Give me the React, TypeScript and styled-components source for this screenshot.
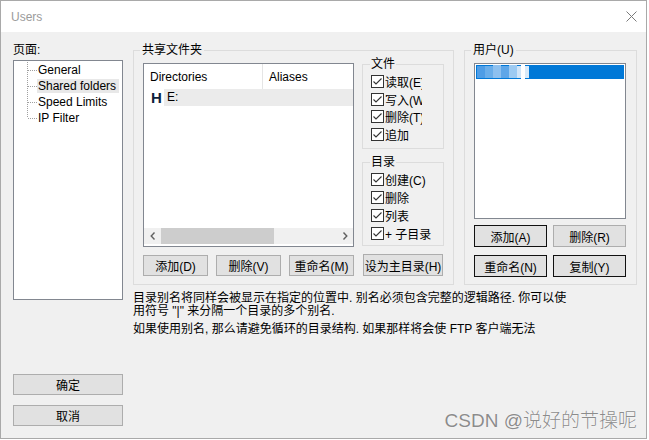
import React from 'react';
import styled, { createGlobalStyle } from 'styled-components';

const GlobalStyle = createGlobalStyle`
  html, body {
    margin: 0;
    padding: 0;
    background: #ffffff;
  }
  body {
    font-family: "Liberation Sans", "Noto Sans CJK SC", sans-serif;
    font-size: 12px;
    color: #000;
  }
`;

const pages = ['General', 'Shared folders', 'Speed Limits', 'IP Filter'];
const fileRights = ['读取(E)', '写入(W)', '删除(T)', '追加'];
const dirRights = ['创建(C)', '删除', '列表', '+ 子目录'];

const Window = styled.div`
  position: relative;
  width: 647px;
  height: 439px;
  box-sizing: border-box;
  border: 1px solid #a9a9a9;
  display: flex;
  flex-direction: column;
  overflow: hidden;
`;

const TitleBar = styled.div`
  height: 31px;
  flex: none;
  background: #ffffff;
  display: flex;
  align-items: center;
  justify-content: space-between;
  padding: 0 9px 0 10px;
`;

const Title = styled.span`
  font-size: 12px;
  color: #9b9b9b;
`;

const Body = styled.div`
  flex: 1;
  background: #f0f0f0;
  display: grid;
  grid-template-columns: 110px 1fr;
  column-gap: 10px;
  padding: 0 9px 0 12px;
`;

const LeftCol = styled.div`
  display: flex;
  flex-direction: column;
`;

const PageLabel = styled.div`
  margin-top: 11px;
  line-height: 14px;
`;

const TreeBox = styled.div`
  margin-top: 3px;
  height: 240px;
  box-sizing: border-box;
  border: 1px solid #828790;
  background: #ffffff;
  padding: 1px 0 0 13px;
`;

const TreeRow = styled.div`
  display: flex;
  align-items: center;
  height: 16px;
`;

const TreeText = styled.span<{ $selected?: boolean }>`
  line-height: 14px;
  padding: 0 3px 0 1px;
  white-space: nowrap;
  background: ${p => (p.$selected ? '#e8e8e8' : 'transparent')};
`;

const RightCol = styled.div`
  display: flex;
  flex-direction: column;
  min-width: 0;
`;

const TopRow = styled.div`
  display: flex;
  gap: 10px;
  margin-top: 11px;
`;

const Group = styled.fieldset<{ $width?: number }>`
  margin: 0;
  padding: 0;
  min-width: 0;
  border: 1px solid #dcdcdc;
  ${p => (p.$width ? `width: ${p.$width}px; flex: none;` : 'flex: 1;')}
  box-sizing: border-box;
`;

const Legend = styled.legend`
  margin-left: 6px;
  padding: 0 2px;
  line-height: 14px;
  font-size: 12px;
`;

const SharedInner = styled.div`
  display: flex;
  gap: 8px;
  padding: 0 9px 8px 9px;
`;

const ListPane = styled.div`
  width: 211px;
  display: flex;
  flex-direction: column;
`;

const ListView = styled.div`
  margin-top: 6px;
  height: 184px;
  box-sizing: border-box;
  border: 1px solid #828790;
  background: #ffffff;
  display: flex;
  flex-direction: column;
`;

const Header = styled.div`
  display: flex;
  height: 25px;
  flex: none;
`;

const HeaderCell = styled.div<{ $width?: number }>`
  ${p => (p.$width ? `width: ${p.$width}px; flex: none; border-right: 1px solid #e5e5e5;` : 'flex: 1;')}
  box-sizing: border-box;
  display: flex;
  align-items: center;
  padding-left: 6px;
`;

const DirRow = styled.div`
  display: flex;
  height: 17px;
`;

const DriveIcon = styled.span`
  width: 20px;
  flex: none;
  box-sizing: border-box;
  padding-left: 7px;
  font-family: "Liberation Sans", sans-serif;
  font-weight: bold;
  font-size: 15px;
  line-height: 17px;
  color: #0d1f3c;
`;

const DirCell = styled.span`
  flex: 1;
  background: #ebebeb;
  line-height: 17px;
  padding-left: 3px;
`;

const Spacer = styled.div`
  flex: 1;
`;

const HScroll = styled.div`
  height: 16px;
  flex: none;
  margin-bottom: 2px;
  background: #f0f0f0;
  display: flex;
  align-items: center;
`;

const ScrollArrow = styled.span`
  width: 17px;
  flex: none;
  display: flex;
  justify-content: center;
  align-items: center;
`;

const ScrollTrack = styled.div`
  flex: 1;
  height: 100%;
  display: flex;
`;

const ScrollThumb = styled.div`
  width: 113px;
  height: 100%;
  background: #cdcdcd;
`;

const ButtonGrid = styled.div<{ $cols: number; $gap: number; $top: number }>`
  display: grid;
  grid-template-columns: repeat(${p => p.$cols}, 1fr);
  gap: 8px ${p => p.$gap}px;
  margin-top: ${p => p.$top}px;
`;

const Button = styled.button<{ $dark?: boolean; $height?: number }>`
  height: ${p => p.$height ?? 21}px;
  box-sizing: border-box;
  margin: 0;
  padding: 0;
  border: 1px solid ${p => (p.$dark ? '#111111' : '#adadad')};
  background: #e1e1e1;
  font-family: inherit;
  font-size: 12px;
  color: #000;
  white-space: nowrap;
`;

const RightsPane = styled.div`
  width: 82px;
  flex: none;
  display: flex;
  flex-direction: column;
`;

const RightsGroup = styled.fieldset<{ $top: number; $padTop: number; $padBottom: number }>`
  margin: ${p => p.$top}px 0 0 0;
  padding: ${p => p.$padTop}px 0 ${p => p.$padBottom}px 0;
  min-width: 0;
  border: 1px solid #dcdcdc;
`;

const RightsLegend = styled.legend`
  margin-left: 7px;
  padding: 0 1px;
  line-height: 14px;
`;

const CheckRow = styled.label<{ $height: number }>`
  display: flex;
  align-items: center;
  height: ${p => p.$height}px;
  padding-left: 8px;
  gap: 1px;
`;

const CheckText = styled.span<{ $clip?: number }>`
  white-space: nowrap;
  overflow: hidden;
  ${p => (p.$clip ? `max-width: ${p.$clip}px;` : '')}
`;

const HomeButton = styled(Button)`
  margin: 8px 0 0 1px;
  width: 80px;
`;

const UsersInner = styled.div`
  padding: 0 10px 7px 9px;
`;

const UserList = styled.div`
  margin-top: 6px;
  height: 156px;
  box-sizing: border-box;
  border: 1px solid #828790;
  background: #ffffff;
  padding: 1px;
`;

const UserRow = styled.div`
  height: 14px;
  background: #0078d7;
  display: flex;
  align-items: center;
`;

const Description = styled.div`
  margin-top: 7px;
  line-height: 13px;
  white-space: nowrap;
`;

const Para = styled.p`
  margin: 0 0 5px 0;
`;

const OkButton = styled(Button)`
  margin-top: 74px;
`;

const CancelButton = styled(Button)`
  margin-top: 10px;
`;

const Watermark = styled.div`
  position: absolute;
  right: 9px;
  bottom: 6px;
  font-size: 19px;
  line-height: 22px;
  color: #8c8c8c;
  text-shadow: 0 0 1px #ffffff, 0 0 1px #ffffff;
  font-family: "Liberation Sans", "Noto Sans CJK SC", sans-serif;
  font-weight: 300;
`;

const CloseIcon = () => (
  <svg width="11" height="11" viewBox="0 0 11 11">
    <path d="M0.5 0.5 L10.5 10.5 M10.5 0.5 L0.5 10.5" stroke="#7a7a7a" strokeWidth="1" fill="none" />
  </svg>
);

const TreeConnector = ({ last }: { last?: boolean }) => (
  <svg width="10" height="16" viewBox="0 0 10 16" style={{ flex: 'none' }}>
    <line x1="0.5" y1="0" x2="0.5" y2={last ? 8 : 16} stroke="#a0a0a0" strokeDasharray="1 1" />
    <line x1="1" y1="8.5" x2="10" y2="8.5" stroke="#a0a0a0" strokeDasharray="1 1" />
  </svg>
);

const CheckBox = () => (
  <svg width="13" height="13" viewBox="0 0 13 13" style={{ flex: 'none' }}>
    <rect x="0.5" y="0.5" width="12" height="12" fill="#ffffff" stroke="#333333" />
    <path d="M2.5 6.5 L5 9 L10.5 3.5" stroke="#333333" strokeWidth="1.1" fill="none" />
  </svg>
);

const Chevron = ({ dir }: { dir: 'left' | 'right' }) => (
  <svg width="6" height="8" viewBox="0 0 6 8">
    <path d={dir === 'left' ? 'M4.5 0.5 L1.2 4 L4.5 7.5' : 'M1.5 0.5 L4.8 4 L1.5 7.5'} stroke="#606060" strokeWidth="1.4" fill="none" />
  </svg>
);

// blurred user name
const Mosaic = () => (
  <svg width="56" height="14" viewBox="0 0 56 14" style={{ marginLeft: 1 }}>
    <rect x="0" y="1" width="8" height="12" fill="#4e9de6" />
    <rect x="8" y="1" width="8" height="12" fill="#6aaeea" />
    <rect x="16" y="0" width="8" height="13" fill="#8dc0ef" />
    <rect x="24" y="1" width="8" height="12" fill="#5ea6e8" />
    <rect x="32" y="0" width="8" height="13" fill="#9ccaf2" />
    <rect x="40" y="1" width="4" height="12" fill="#cfe4f8" />
    <rect x="44" y="0" width="4" height="14" fill="#ffffff" />
    <rect x="48" y="1" width="4" height="12" fill="#d9eaf9" />
  </svg>
);

const App: React.FC = () => {
  return (
    <>
      <GlobalStyle />
      <Window>
        <TitleBar>
          <Title>Users</Title>
          <CloseIcon />
        </TitleBar>
        <Body>
          <LeftCol>
            <PageLabel>页面:</PageLabel>
            <TreeBox>
              {pages.map((page, i) => (
                <TreeRow key={page}>
                  <TreeConnector last={i === pages.length - 1} />
                  <TreeText $selected={page === 'Shared folders'}>{page}</TreeText>
                </TreeRow>
              ))}
            </TreeBox>
            <OkButton>确定</OkButton>
            <CancelButton>取消</CancelButton>
          </LeftCol>

          <RightCol>
            <TopRow>
              <Group $width={321}>
                <Legend>共享文件夹</Legend>
                <SharedInner>
                  <ListPane>
                    <ListView>
                      <Header>
                        <HeaderCell $width={119}>Directories</HeaderCell>
                        <HeaderCell>Aliases</HeaderCell>
                      </Header>
                      <DirRow>
                        <DriveIcon>H</DriveIcon>
                        <DirCell>E:</DirCell>
                      </DirRow>
                      <Spacer />
                      <HScroll>
                        <ScrollArrow><Chevron dir="left" /></ScrollArrow>
                        <ScrollTrack>
                          <ScrollThumb />
                        </ScrollTrack>
                        <ScrollArrow><Chevron dir="right" /></ScrollArrow>
                      </HScroll>
                    </ListView>
                    <ButtonGrid $cols={3} $gap={8} $top={8}>
                      <Button>添加(D)</Button>
                      <Button>删除(V)</Button>
                      <Button>重命名(M)</Button>
                    </ButtonGrid>
                  </ListPane>

                  <RightsPane>
                    <RightsGroup $top={0} $padTop={2} $padBottom={5}>
                      <RightsLegend>文件</RightsLegend>
                      {fileRights.map(r => (
                        <CheckRow key={r} $height={17.5}>
                          <CheckBox />
                          <CheckText $clip={37}>{r}</CheckText>
                        </CheckRow>
                      ))}
                    </RightsGroup>
                    <RightsGroup $top={6} $padTop={1} $padBottom={3}>
                      <RightsLegend>目录</RightsLegend>
                      {dirRights.map(r => (
                        <CheckRow key={r} $height={18}>
                          <CheckBox />
                          <CheckText>{r}</CheckText>
                        </CheckRow>
                      ))}
                    </RightsGroup>
                    <HomeButton $height={22}>设为主目录(H)</HomeButton>
                  </RightsPane>
                </SharedInner>
              </Group>

              <Group>
                <Legend>用户(U)</Legend>
                <UsersInner>
                  <UserList>
                    <UserRow>
                      <Mosaic />
                    </UserRow>
                  </UserList>
                  <ButtonGrid $cols={2} $gap={6} $top={6}>
                    <Button $dark $height={22}>添加(A)</Button>
                    <Button $height={22}>删除(R)</Button>
                    <Button $dark $height={22}>重命名(N)</Button>
                    <Button $dark $height={22}>复制(Y)</Button>
                  </ButtonGrid>
                </UsersInner>
              </Group>
            </TopRow>

            <Description>
              <Para>
                目录别名将同样会被显示在指定的位置中. 别名必须包含完整的逻辑路径. 你可以使
                <br />
                用符号 "|" 来分隔一个目录的多个别名.
              </Para>
              <Para>如果使用别名, 那么请避免循环的目录结构. 如果那样将会使 FTP 客户端无法</Para>
            </Description>
          </RightCol>
        </Body>
        <Watermark>CSDN @说好的节操呢</Watermark>
      </Window>
    </>
  );
};

export default App;
